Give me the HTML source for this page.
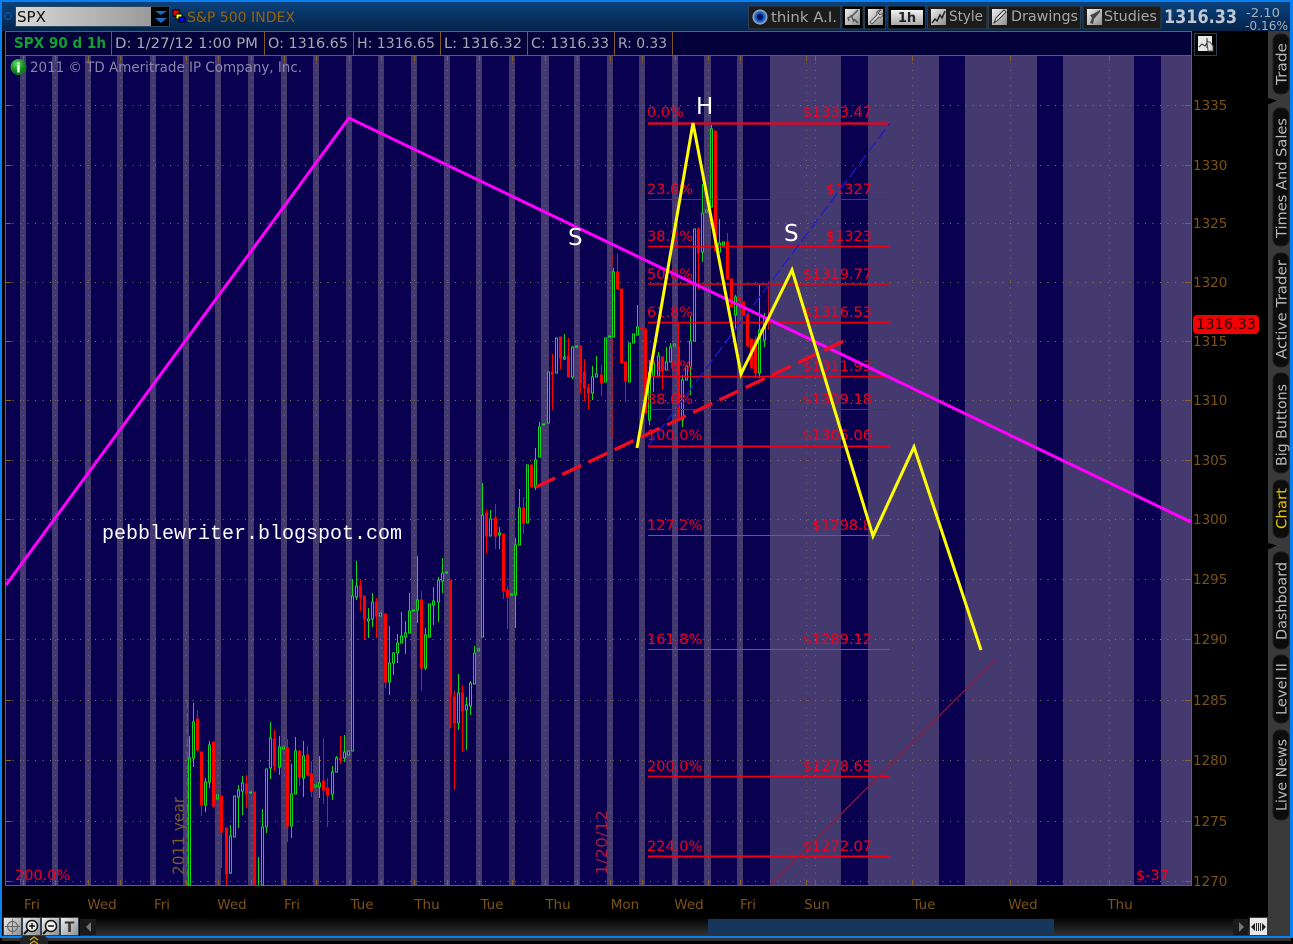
<!DOCTYPE html>
<html><head><meta charset="utf-8"><title>SPX chart</title>
<style>html,body{margin:0;padding:0;background:#000;width:1293px;height:944px;overflow:hidden}svg{display:block}text{font-family:"DejaVu Sans","Liberation Sans",sans-serif}</style></head>
<body>
<svg xmlns="http://www.w3.org/2000/svg" width="1293" height="944" viewBox="0 0 1293 944">
<defs>
<linearGradient id="top" x1="0" y1="0" x2="0" y2="1"><stop offset="0" stop-color="#0b4480"/><stop offset="1" stop-color="#04234a"/></linearGradient>
<linearGradient id="box" x1="0" y1="0" x2="1" y2="0"><stop offset="0" stop-color="#d8d8d8"/><stop offset="1" stop-color="#9a9a9a"/></linearGradient>
<linearGradient id="sc" x1="0" y1="0" x2="0" y2="1"><stop offset="0" stop-color="#000"/><stop offset="1" stop-color="#333"/></linearGradient>
<linearGradient id="ic" x1="0" y1="0" x2="1" y2="1"><stop offset="0" stop-color="#f0f0f0"/><stop offset="1" stop-color="#8c8c8c"/></linearGradient>
<linearGradient id="oh" x1="0" y1="0" x2="0" y2="1"><stop offset="0" stop-color="#f2f2f2"/><stop offset="1" stop-color="#aaa"/></linearGradient>
<radialGradient id="eye"><stop offset="0" stop-color="#0a1a80"/><stop offset=".6" stop-color="#1060c0"/><stop offset="1" stop-color="#b0b8d0"/></radialGradient>
<radialGradient id="inf" cx=".4" cy=".3"><stop offset="0" stop-color="#60e060"/><stop offset="1" stop-color="#108020"/></radialGradient>
</defs>
<rect width="1293" height="944" fill="#000"/>
<rect width="1293" height="31" fill="url(#top)"/>
<rect width="1293" height="2" fill="#0a80f0"/>
<rect x="0" y="0" width="2" height="938" fill="#0a80f0"/>
<rect x="1290" y="0" width="3" height="938" fill="#0a80f0"/>

<!-- symbol box -->
<circle cx="8" cy="16" r="3.500" fill="none" stroke="#0c5cb0"/>
<rect x="15.500" y="6.500" width="154" height="20" fill="#000" stroke="#2c4460"/>
<rect x="16" y="7" width="135" height="19" fill="url(#box)"/>
<text x="17" y="22" font-size="15" fill="#111">SPX</text>
<path d="M155 11h12l-6 4zM155 18h12l-6 5z" fill="#1c6cc8"/>
<rect x="173" y="10" width="6" height="6" fill="#f00" stroke="#000"/><rect x="176" y="14" width="6" height="5" fill="#ff0" stroke="#000"/><rect x="179" y="17" width="6" height="5" fill="#00f" stroke="#000"/>
<text x="187" y="22" font-size="14" fill="#9a6208" textLength="108" lengthAdjust="spacingAndGlyphs">S&amp;P 500 INDEX</text>

<!-- toolbar -->
<g fill="#1b1b1b" stroke="#2c3e52">
<rect x="748.500" y="6" width="92" height="23"/><rect x="842" y="6" width="21" height="23" fill="#000"/><rect x="864.500" y="6" width="21" height="23" fill="#000"/><rect x="888" y="6" width="37.500" height="23" fill="#000"/><rect x="927.500" y="6" width="59.500" height="23"/><rect x="988.500" y="6" width="92" height="23"/><rect x="1083" y="6" width="78" height="23"/>
</g>
<circle cx="760" cy="17" r="7.500" fill="url(#eye)"/><circle cx="760" cy="17" r="3" fill="#041060"/>
<g fill="#a8a8a8" font-size="14.500">
<text x="771" y="22" textLength="66" lengthAdjust="spacingAndGlyphs">think A.I.</text>
<text x="949" y="21" textLength="34" lengthAdjust="spacingAndGlyphs">Style</text>
<text x="1011" y="21" textLength="67" lengthAdjust="spacingAndGlyphs">Drawings</text>
<text x="1104" y="21" textLength="53" lengthAdjust="spacingAndGlyphs">Studies</text>
</g>
<rect x="845" y="9" width="15" height="16" fill="url(#ic)"/><path d="M858 10l-6 6-4 2 1 3M851 15l3 7M858 23l-4-4" stroke="#555" stroke-width="1.500" fill="none"/>
<rect x="868" y="9" width="15" height="16" fill="url(#ic)"/><path d="M881 10c-4 0-5 3-4 5l-7 7 2 2 7-7c3 1 4-2 4-4l-3 2-2-2z" fill="#ddd" stroke="#555"/>
<rect x="891" y="10" width="32" height="15" fill="url(#oh)"/><text x="907" y="22" text-anchor="middle" font-size="13" font-weight="700" fill="#222">1h</text>
<rect x="931" y="9" width="15" height="16" fill="url(#ic)"/><path d="M932 23l3-4 2 2 3-6 2 3 3-7" stroke="#222" stroke-width="1.500" fill="none"/>
<rect x="992" y="9" width="15" height="16" fill="url(#ic)"/><path d="M994 23l2-5 8-8 2 2-8 8z" fill="#eee" stroke="#333"/>
<rect x="1087" y="9" width="15" height="16" fill="url(#ic)"/><path d="M1100 10l-7 4-3 1 2 3-2 5 3 1 1-5 6-7z" fill="#444"/>
<text x="1164" y="23" font-size="18.500" font-weight="700" fill="#c0c8d0" textLength="73" lengthAdjust="spacingAndGlyphs">1316.33</text>
<text x="1246" y="17" font-size="12.500" fill="#a8b0b8" textLength="34" lengthAdjust="spacingAndGlyphs">-2.10</text>
<text x="1245" y="30" font-size="12.500" fill="#a8b0b8" textLength="43" lengthAdjust="spacingAndGlyphs">-0.16%</text>

<!-- chart bg -->
<rect x="5" y="55" width="1186" height="830" fill="#0a0050"/>
<rect x="5" y="31" width="1186" height="24" fill="#04003a"/>
<path fill="#453a70" d="M20 55h6v830h-6zM52 55h6v830h-6zM85 55h6v830h-6zM117 55h6v830h-6zM150 55h6v830h-6zM183 55h6v830h-6zM215 55h6v830h-6zM248 55h6v830h-6zM281 55h6v830h-6zM313 55h6v830h-6zM346 55h6v830h-6zM378 55h6v830h-6zM411 55h6v830h-6zM444 55h6v830h-6zM476 55h6v830h-6zM509 55h6v830h-6zM541 55h8v830h-8zM574 55h6v830h-6zM607 55h6v830h-6zM639 55h6v830h-6zM672 55h6v830h-6zM704 55h7v830h-7zM737 55h6v830h-6zM770 55h71v830h-71zM868 55h71v830h-71zM965 55h72v830h-72zM1063 55h71v830h-71zM1161 55h30v830h-30z"/>
<!-- grid -->
<g stroke="#8a7448" stroke-dasharray="1 6.500" fill="none" shape-rendering="crispEdges">
<path d="M5 105.500H1191M5 165.500H1191M5 223.500H1191M5 282.500H1191M5 341.500H1191M5 400.500H1191M5 460.500H1191M5 519.500H1191M5 579.500H1191M5 639.500H1191M5 700.500H1191M5 760.500H1191M5 821.500H1191M5 881.500H1191"/>
<path stroke-opacity=".75" d="M23.500 55V885M55.500 55V885M88.500 55V885M120.500 55V885M153.500 55V885M186.500 55V885M218.500 55V885M251.500 55V885M284.500 55V885M316.500 55V885M349.500 55V885M381.500 55V885M414.500 55V885M447.500 55V885M479.500 55V885M512.500 55V885M545.500 55V885M577.500 55V885M610.500 55V885M642.500 55V885M675.500 55V885M708.500 55V885M740.500 55V885M806.500 55V885M815.500 55V885M912.500 55V885M1010.500 55V885M1109.500 55V885"/>
</g>
<path stroke="#8a6030" d="M23.500 55v6M55.500 55v6M88.500 55v6M120.500 55v6M153.500 55v6M186.500 55v6M218.500 55v6M251.500 55v6M284.500 55v6M316.500 55v6M349.500 55v6M381.500 55v6M414.500 55v6M447.500 55v6M479.500 55v6M512.500 55v6M545.500 55v6M577.500 55v6M610.500 55v6M642.500 55v6M675.500 55v6M708.500 55v6M740.500 55v6M806.500 55v6M815.500 55v6M912.500 55v6M1010.500 55v6M1109.500 55v6M23.500 880v5M55.500 880v5M88.500 880v5M120.500 880v5M153.500 880v5M186.500 880v5M218.500 880v5M251.500 880v5M284.500 880v5M316.500 880v5M349.500 880v5M381.500 880v5M414.500 880v5M447.500 880v5M479.500 880v5M512.500 880v5M545.500 880v5M577.500 880v5M610.500 880v5M642.500 880v5M675.500 880v5M708.500 880v5M740.500 880v5M806.500 880v5M815.500 880v5M912.500 880v5M1010.500 880v5M1109.500 880v5M5 105.500h6M5 165.500h6M5 223.500h6M5 282.500h6M5 341.500h6M5 400.500h6M5 460.500h6M5 519.500h6M5 579.500h6M5 639.500h6M5 700.500h6M5 760.500h6M5 821.500h6M5 881.500h6M1185 105.500h6M1185 165.500h6M1185 223.500h6M1185 282.500h6M1185 341.500h6M1185 400.500h6M1185 460.500h6M1185 519.500h6M1185 579.500h6M1185 639.500h6M1185 700.500h6M1185 760.500h6M1185 821.500h6M1185 881.500h6" fill="none"/>
<!-- markers -->
<path d="M187.500 700V885" stroke="#7a5a2c" stroke-dasharray="8 5"/>
<path d="M612.500 254V440" stroke="#a01c38" stroke-dasharray="14 3"/>
<!-- header cells -->
<path d="M5.500 31.500H1191.500V885.500H5.500ZM5.500 55.500H1191.500M111.500 31.500V55.500M264.500 31.500V55.500M353.500 31.500V55.500M440.500 31.500V55.500M527.500 31.500V55.500M614.500 31.500V55.500M672.500 31.500V55.500" fill="none" stroke="#80582a"/>
<text x="14" y="48" font-size="15" font-weight="700" fill="#10a030" textLength="92" lengthAdjust="spacingAndGlyphs">SPX 90 d 1h</text>
<g font-size="14" fill="#a8a8b0">
<text x="115" y="48" textLength="143" lengthAdjust="spacingAndGlyphs">D: 1/27/12 1:00 PM</text>
<text x="268" y="48" textLength="80" lengthAdjust="spacingAndGlyphs">O: 1316.65</text>
<text x="357" y="48" textLength="78" lengthAdjust="spacingAndGlyphs">H: 1316.65</text>
<text x="444" y="48" textLength="78" lengthAdjust="spacingAndGlyphs">L: 1316.32</text>
<text x="531" y="48" textLength="78" lengthAdjust="spacingAndGlyphs">C: 1316.33</text>
<text x="618" y="48" textLength="49" lengthAdjust="spacingAndGlyphs">R: 0.33</text>
</g>
<circle cx="18.500" cy="67" r="8" fill="url(#inf)"/><text x="18.500" y="72.500" text-anchor="middle" font-size="13" font-weight="700" fill="#fff">i</text>
<text x="30" y="72" font-size="14" fill="#8a86a8" textLength="272" lengthAdjust="spacingAndGlyphs">2011 © TD Ameritrade IP Company, Inc.</text>

<!-- candles -->
<g shape-rendering="crispEdges">
<path fill="none" stroke="#12d81c" d="M189.500 736V885M193.500 703V767M205.500 778V812M209.500 741V788M230.500 825V874M238.500 785V828M242.500 776V815M258.500 857V885M262.500 809V885M266.500 769V833M270.500 722V779M279.500 736V775M291.500 764V838M295.500 737V794M303.500 741V797M319.500 756V798M332.500 766V800M336.500 756V772M344.500 735V762M352.500 579V751M356.500 561V600M368.500 608V638M372.500 593V627M389.500 626V695M393.500 652V675M397.500 634V663M401.500 612V643M405.500 621V654M409.500 593V633M417.500 556V623M425.500 628V670M433.500 587V625M438.500 577V622M442.500 558V593M458.500 674V730M466.500 697V750M470.500 681V715M474.500 646V684M482.500 483V637M490.500 510V536M499.500 527V549M515.500 538V628M519.500 489V545M535.500 448V490M539.500 422V457M564.500 334V360M572.500 346V379M592.500 366V400M596.500 356V377M613.500 268V337M637.500 305V335M649.500 360V425M653.500 360V392M658.500 352V376M666.500 347V370M670.500 343V362M682.500 375V427M690.500 316V395M702.500 184V262M711.500 125V207M719.500 219V252M735.500 295V330M759.500 285V378M764.500 313V347"/>
<path fill="#0a0050" stroke="#12d81c" d="M188.500 758h2V885h-2zM192.500 722h2V758h-2zM204.500 782h2V805h-2zM208.500 745h2V782h-2zM216.500 795h2V799h-2zM229.500 836h2V873h-2zM233.500 796h2V837h-2zM237.500 790h2V797h-2zM241.500 783h2V791h-2zM249.500 792h2V793h-2zM261.500 827h2V885h-2zM265.500 769h2V827h-2zM269.500 738h2V768h-2zM278.500 747h2V767h-2zM282.500 747h2V749h-2zM290.500 794h2V826h-2zM294.500 751h2V794h-2zM302.500 756h2V778h-2zM314.500 785h2V787h-2zM318.500 783h2V787h-2zM331.500 772h2V794h-2zM335.500 758h2V772h-2zM343.500 752h2V758h-2zM347.500 751h2V755h-2zM351.500 596h2V751h-2zM355.500 586h2V597h-2zM367.500 619h2V621h-2zM371.500 602h2V619h-2zM379.500 613h2V616h-2zM388.500 663h2V682h-2zM392.500 653h2V663h-2zM396.500 643h2V653h-2zM400.500 636h2V643h-2zM404.500 633h2V637h-2zM408.500 611h2V633h-2zM412.500 610h2V611h-2zM416.500 600h2V610h-2zM424.500 635h2V668h-2zM428.500 604h2V637h-2zM432.500 601h2V605h-2zM437.500 580h2V602h-2zM441.500 573h2V581h-2zM445.500 572h2V573h-2zM457.500 693h2V723h-2zM465.500 705h2V710h-2zM469.500 683h2V706h-2zM473.500 653h2V684h-2zM477.500 649h2V651h-2zM481.500 515h2V637h-2zM489.500 519h2V536h-2zM498.500 533h2V535h-2zM510.500 594h2V595h-2zM514.500 545h2V595h-2zM518.500 508h2V545h-2zM526.500 465h2V523h-2zM534.500 460h2V487h-2zM538.500 427h2V457h-2zM542.500 424h2V425h-2zM547.500 372h2V423h-2zM555.500 338h2V373h-2zM563.500 357h2V359h-2zM571.500 347h2V377h-2zM575.500 346h2V347h-2zM591.500 377h2V393h-2zM595.500 374h2V377h-2zM604.500 338h2V382h-2zM608.500 336h2V337h-2zM612.500 272h2V337h-2zM628.500 343h2V382h-2zM632.500 334h2V343h-2zM636.500 327h2V335h-2zM648.500 373h2V420h-2zM652.500 362h2V376h-2zM657.500 356h2V376h-2zM665.500 362h2V370h-2zM669.500 347h2V362h-2zM673.500 344h2V346h-2zM681.500 380h2V420h-2zM685.500 366h2V380h-2zM689.500 341h2V366h-2zM693.500 229h2V341h-2zM701.500 213h2V252h-2zM705.500 210h2V212h-2zM710.500 129h2V207h-2zM718.500 243h2V252h-2zM722.500 242h2V245h-2zM734.500 297h2V315h-2zM758.500 330h2V373h-2zM763.500 318h2V340h-2z"/>
<path fill="#f00" stroke="#f00" d="M197.500 710V750M196.500 719h2V750h-2zM201.500 752V816M200.500 752h2V805h-2zM213.500 742V808M212.500 742h2V806h-2zM221.500 796V868M220.500 796h2V832h-2zM226.500 828V885M225.500 828h2V874h-2zM246.500 775V808M245.500 784h2V794h-2zM253.500 792h2V885h-2zM274.500 730V771M273.500 739h2V766h-2zM287.500 739V842M286.500 748h2V826h-2zM299.500 751V786M298.500 751h2V777h-2zM307.500 746V775M306.500 755h2V775h-2zM311.500 761V797M310.500 774h2V791h-2zM323.500 738V804M322.500 781h2V790h-2zM327.500 778V827M326.500 788h2V795h-2zM340.500 736V764M339.500 758h2V760h-2zM360.500 579V611M359.500 586h2V597h-2zM364.500 596V640M363.500 596h2V619h-2zM376.500 598V638M375.500 602h2V616h-2zM385.500 614V688M384.500 614h2V682h-2zM421.500 591V691M420.500 600h2V668h-2zM450.500 580V728M449.500 580h2V695h-2zM454.500 691V790M453.500 697h2V723h-2zM462.500 685V752M461.500 693h2V711h-2zM486.500 510V553M485.500 513h2V536h-2zM495.500 504V549M494.500 518h2V536h-2zM503.500 534V599M502.500 534h2V591h-2zM507.500 586V629M506.500 590h2V597h-2zM523.500 497V534M522.500 508h2V523h-2zM530.500 465h2V487h-2zM552.500 354V410M551.500 372h2V374h-2zM560.500 337V369M559.500 337h2V358h-2zM568.500 338V377M567.500 356h2V377h-2zM580.500 346V393M579.500 346h2V383h-2zM584.500 359V401M583.500 372h2V388h-2zM588.500 384V410M587.500 388h2V393h-2zM601.500 365V396M600.500 375h2V383h-2zM617.500 254V289M616.500 272h2V289h-2zM620.500 289h2V363h-2zM625.500 362V402M624.500 362h2V381h-2zM640.500 328h2V329h-2zM644.500 329h2V413h-2zM662.500 357V390M661.500 357h2V371h-2zM678.500 322V417M677.500 347h2V417h-2zM698.500 227V290M697.500 229h2V253h-2zM714.500 131h2V251h-2zM727.500 233V279M726.500 242h2V279h-2zM730.500 279h2V307h-2zM738.500 298h2V300h-2zM742.500 302h2V315h-2zM746.500 314h2V346h-2zM750.500 339h2V368h-2zM755.500 336V378M754.500 340h2V373h-2z"/>
<path stroke="#c01030" d="M768.500 281V330" fill="none"/>
</g>

<!-- fib lines -->
<g fill="none" stroke="#ec0018">
<path d="M648 123.500H890" stroke-width="2.500" stroke="#d00a28"/>
<path d="M648 199.500H890" stroke="#b80824"/>
<path d="M648 246.500H890" stroke-width="1.500"/>
<path d="M648 284H890" stroke-width="1.500"/>
<path d="M648 322.500H890" stroke-width="1.500"/>
<path d="M648 376.500H890" stroke-width="1.500"/>
<path d="M648 409.500H890" stroke="#a80a30"/>
<path d="M648 446.500H890" stroke-width="2"/>
<path d="M648 535.500H890" stroke="#6a5a84"/>
<path d="M648 649.500H890" stroke="#6a5a84"/>
<path d="M648 776.500H890" stroke-width="1.500"/>
<path d="M648 856.500H890" stroke-width="2"/>
</g>
<g font-size="14.500" fill="#f0001e">
<text x="647" y="117">0.0%</text><text x="647" y="194">23.6%</text><text x="647" y="241">38.2%</text><text x="647" y="279">50.0%</text><text x="647" y="317">61.8%</text><text x="647" y="371">78.6%</text><text x="647" y="404">88.6%</text><text x="647" y="440">100.0%</text><text x="647" y="530">127.2%</text><text x="647" y="644">161.8%</text><text x="647" y="771">200.0%</text><text x="647" y="851">224.0%</text>
<g text-anchor="end"><text x="872" y="117">$1333.47</text><text x="872" y="194">$1327</text><text x="872" y="241">$1323</text><text x="872" y="279">$1319.77</text><text x="872" y="317">$1316.53</text><text x="872" y="371">$1311.93</text><text x="872" y="404">$1309.18</text><text x="872" y="440">$1305.06</text><text x="872" y="530">$1298.8</text><text x="872" y="644">$1289.12</text><text x="872" y="771">$1278.65</text><text x="872" y="851">$1272.07</text></g>
<text x="15" y="880">200.0%</text><text x="1136" y="880">$-37</text>
</g>
<text transform="translate(184 875) rotate(-90)" font-size="16" fill="#7a5a2c" textLength="78" lengthAdjust="spacingAndGlyphs">2011 year</text>
<text transform="translate(607 875) rotate(-90)" font-size="15" fill="#a01c40" textLength="65" lengthAdjust="spacingAndGlyphs">1/20/12</text>

<!-- trend lines -->
<path d="M648 446L890 123" stroke="#1c1ccc" stroke-width="1.300" stroke-dasharray="12 4" fill="none"/>
<path d="M770 885L995 660" stroke="#84203f" stroke-width="1.200" fill="none"/>
<path d="M6 585L349 118L1191 522" stroke="#ff00ff" stroke-width="3" fill="none"/>
<path d="M536 487L848 339" stroke="#f00c20" stroke-width="3.400" stroke-dasharray="21 8" fill="none"/>
<path d="M637 448L693 123L741 374L792 270L873 536L914 447L981 650" stroke="#ffff00" stroke-width="3" fill="none"/>
<text x="102" y="539" font-size="20" fill="#fff" style="font-family:'Liberation Mono',monospace" textLength="300" lengthAdjust="spacingAndGlyphs">pebblewriter.blogspot.com</text>
<g font-size="23" fill="#fff"><text x="696" y="114">H</text><text x="568" y="245">S</text><text x="784" y="241">S</text></g>

<!-- price axis -->
<g font-size="13.500" fill="#7c5218">
<text x="1193" y="110">1335</text><text x="1193" y="170">1330</text><text x="1193" y="228">1325</text><text x="1193" y="287">1320</text><text x="1193" y="346">1315</text><text x="1193" y="405">1310</text><text x="1193" y="465">1305</text><text x="1193" y="524">1300</text><text x="1193" y="584">1295</text><text x="1193" y="644">1290</text><text x="1193" y="705">1285</text><text x="1193" y="765">1280</text><text x="1193" y="826">1275</text><text x="1193" y="886">1270</text>
</g>
<rect x="1193" y="315" width="66" height="19" rx="4" fill="#f50000"/>
<text x="1196" y="329" font-size="14" fill="#200000" textLength="60" lengthAdjust="spacingAndGlyphs">1316.33</text>
<rect x="1194.500" y="33.500" width="22" height="22" fill="#000" stroke="#2c3e52"/>
<rect x="1198" y="36" width="14" height="15" fill="#e8e8e8"/><path d="M1199 47l3-3 3 2 3-5M1207 38v10" stroke="#222" fill="none"/><path d="M1207 42h3l3 4v5h-5z" fill="#ddd" stroke="#555"/>

<!-- side tabs -->
<rect x="1268" y="31" width="22" height="907" fill="#3a3a3a"/>
<path d="M1268 98l9 2.500-9 4z" fill="#000"/><path d="M1268 543l9 2.500-9 4z" fill="#000"/>
<g fill="#0c0c0c" stroke="#1e1e1e">
<rect x="1273" y="34" width="16" height="60" rx="7"/><rect x="1273" y="108" width="16" height="138" rx="7"/><rect x="1273" y="253" width="16" height="114" rx="7"/><rect x="1273" y="373" width="16" height="100" rx="7"/><rect x="1273" y="480" width="16" height="58" rx="7"/><rect x="1273" y="552" width="16" height="97" rx="7"/><rect x="1273" y="655" width="16" height="68" rx="7"/><rect x="1273" y="730" width="16" height="90" rx="7"/>
</g>
<g font-size="14" fill="#b8b8b8">
<text transform="translate(1286.500 85) rotate(-90)" textLength="42" lengthAdjust="spacingAndGlyphs">Trade</text>
<text transform="translate(1286.500 238) rotate(-90)" textLength="120" lengthAdjust="spacingAndGlyphs">Times And Sales</text>
<text transform="translate(1286.500 359) rotate(-90)" textLength="99" lengthAdjust="spacingAndGlyphs">Active Trader</text>
<text transform="translate(1286.500 466) rotate(-90)" textLength="82" lengthAdjust="spacingAndGlyphs">Big Buttons</text>
<text transform="translate(1286.500 529) rotate(-90)" fill="#e8c800" textLength="41" lengthAdjust="spacingAndGlyphs">Chart</text>
<text transform="translate(1286.500 640) rotate(-90)" textLength="78" lengthAdjust="spacingAndGlyphs">Dashboard</text>
<text transform="translate(1286.500 715) rotate(-90)" textLength="52" lengthAdjust="spacingAndGlyphs">Level II</text>
<text transform="translate(1286.500 811) rotate(-90)" textLength="72" lengthAdjust="spacingAndGlyphs">Live News</text>
</g>

<!-- date axis -->
<g font-size="13.500" fill="#7c5218" text-anchor="middle">
<text x="32" y="909">Fri</text><text x="102" y="909">Wed</text><text x="162" y="909">Fri</text><text x="232" y="909">Wed</text><text x="292" y="909">Fri</text><text x="362" y="909">Tue</text><text x="427" y="909">Thu</text><text x="492" y="909">Tue</text><text x="558" y="909">Thu</text><text x="625" y="909">Mon</text><text x="689" y="909">Wed</text><text x="748" y="909">Fri</text><text x="817" y="909">Sun</text><text x="924" y="909">Tue</text><text x="1023" y="909">Wed</text><text x="1120" y="909">Thu</text>
</g>

<!-- scrollbar -->
<rect x="80" y="917" width="1188" height="19" fill="url(#sc)"/>
<rect x="80" y="919" width="16" height="16" fill="#1a1a1a"/><path d="M91 922v10l-5-5z" fill="#777"/>
<rect x="708" y="919" width="346" height="15" fill="#17365c"/>
<rect x="1233" y="919" width="15" height="16" fill="#1a1a1a"/><path d="M1239 922v10l5-5z" fill="#777"/>
<rect x="1249.500" y="917.500" width="18" height="18" fill="#e8e8e8" stroke="#2c3e52"/><path d="M1251 927l4-4v8zM1266 927l-4-4v8zM1256 923h1v8h-1zM1258 923h1v8h-1zM1260 923h1v8h-1z" fill="#222"/>
<g stroke="#2c3e52" fill="url(#ic)">
<rect x="3.500" y="917.500" width="18" height="18"/><rect x="22.500" y="917.500" width="18" height="18"/><rect x="41.500" y="917.500" width="18" height="18"/><rect x="60.500" y="917.500" width="18" height="18"/>
</g>
<path d="M12.500 919v15M5 926.500h15" stroke="#666" fill="none"/><circle cx="12.500" cy="926.500" r="5" stroke="#666" fill="none"/>
<circle cx="32" cy="926" r="5.500" fill="#eee" stroke="#111" stroke-width="1.500"/><path d="M29 926h6M32 923v6" stroke="#111" stroke-width="1.500"/><path d="M28 930l-4 4" stroke="#111" stroke-width="2"/>
<circle cx="51" cy="926" r="5.500" fill="#eee" stroke="#111" stroke-width="1.500"/><path d="M48 926h6" stroke="#111" stroke-width="1.500"/><path d="M47 930l-4 4" stroke="#111" stroke-width="2"/>
<text x="69.500" y="932" text-anchor="middle" font-size="14" font-weight="700" fill="#333">T</text>

<!-- bottom -->
<rect x="0" y="936" width="1293" height="2" fill="#0a80f0"/>
<rect x="2" y="938" width="1289" height="3" fill="#333"/>
<path d="M20 944v-5l3-3h22l3 3v5z" fill="#222"/>
<path d="M30 940l4-3 4 3M30 944l4-3 4 3" stroke="#d8b000" stroke-width="1.200" fill="none"/>
</svg>
</body></html>
